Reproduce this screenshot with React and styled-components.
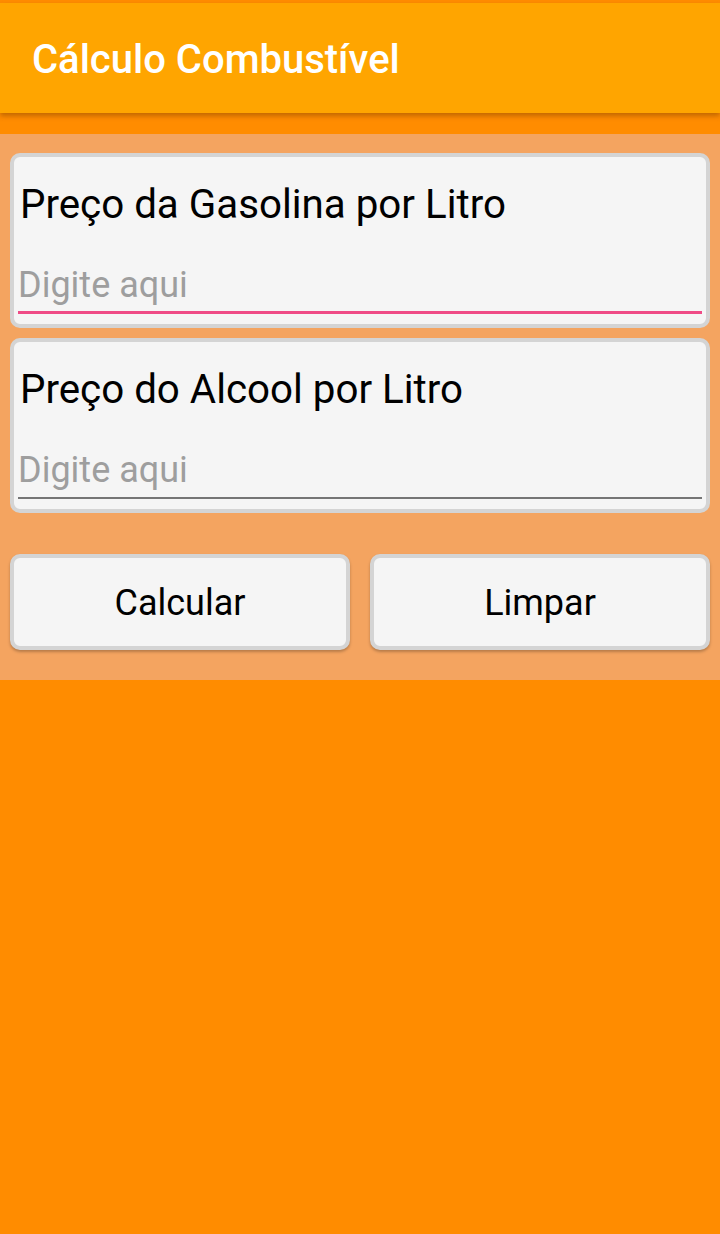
import React from "react";
import styled, { createGlobalStyle } from "styled-components";

const Global = createGlobalStyle`
  html, body { margin: 0; padding: 0; }
  body {
    background: #ff8c00;
    font-family: Roboto, "Noto Sans", sans-serif;
    width: 720px;
    min-height: 1234px;
  }
`;

const Screen = styled.div`
  display: flex;
  flex-direction: column;
  padding-top: 3px;
`;

const Toolbar = styled.header`
  height: 110px;
  background: #ffa500;
  display: flex;
  align-items: center;
  padding-left: 32px;
  padding-top: 2px;
  box-sizing: border-box;
  box-shadow: 0 3px 5px rgba(120, 60, 0, 0.45);
  position: relative;
  z-index: 1;
`;

const Title = styled.h1`
  margin: 0;
  color: #ffffff;
  font-family: Roboto, sans-serif;
  font-weight: 500;
  font-size: 40px;
`;

const Panel = styled.main`
  margin-top: 21px;
  background: #f4a460;
  padding: 19px 10px 30px;
  display: flex;
  flex-direction: column;
`;

const Card = styled.section`
  background: #f5f5f5;
  border: 4px solid #d4d4d4;
  border-radius: 10px;
  padding: 26px 4px 10px;
  display: flex;
  flex-direction: column;
  & + & {
    margin-top: 10px;
  }
`;

const Label = styled.label`
  font-family: Roboto, sans-serif;
  font-size: 40.3px;
  line-height: 44px;
  color: #000;
  padding-left: 2px;
`;

const Input = styled.input`
  margin-top: 36px;
  border: none;
  background: transparent;
  outline: none;
  font-family: Roboto, sans-serif;
  font-size: 36px;
  line-height: 44px;
  height: 44px;
  padding: 0;
  box-sizing: content-box;
  border-bottom: ${(p) => (p.$focused ? "3px solid #ef4b86" : "2px solid #757575")};
  padding-bottom: ${(p) => (p.$focused ? "4px" : "5px")};
  color: #000;
  &::placeholder {
    color: #9e9e9e;
  }
`;

const Buttons = styled.div`
  margin-top: 41px;
  display: grid;
  grid-template-columns: 1fr 1fr;
  gap: 20px;
`;

const Button = styled.button`
  height: 96px;
  background: #f5f5f5;
  border: 4px solid #d4d4d4;
  border-radius: 10px;
  box-shadow: 0 2px 3px rgba(0, 0, 0, 0.25);
  font-family: Roboto, sans-serif;
  font-size: 36px;
  color: #000;
  padding: 2px 0 0;
`;

export default function App() {
  return (
    <>
      <Global />
      <Screen>
        <Toolbar>
          <Title>Cálculo Combustível</Title>
        </Toolbar>
        <Panel>
          <Card>
            <Label>Preço da Gasolina por Litro</Label>
            <Input $focused placeholder="Digite aqui" />
          </Card>
          <Card>
            <Label>Preço do Alcool por Litro</Label>
            <Input placeholder="Digite aqui" />
          </Card>
          <Buttons>
            <Button>Calcular</Button>
            <Button>Limpar</Button>
          </Buttons>
        </Panel>
      </Screen>
    </>
  );
}
